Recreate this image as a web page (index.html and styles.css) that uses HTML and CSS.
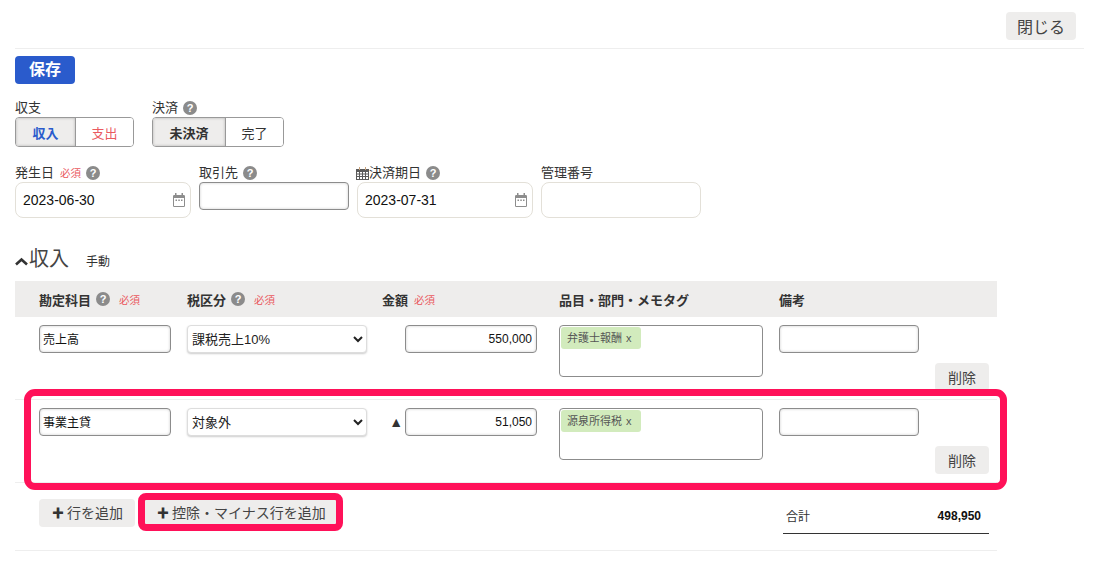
FILE: index.html
```html
<!DOCTYPE html>
<html lang="ja">
<head>
<meta charset="utf-8">
<title>収入</title>
<link rel="stylesheet" href="styles.css">
</head>
<body>
<header class="topbar"><button class="btn btn-close">閉じる</button></header>
<button class="btn-save">保存</button>

<div class="toggles">
  <div>
    <div class="label">収支</div>
    <div class="seg">
      <span class="seg-item seg-on seg-blue seg-w60">収入</span>
      <span class="seg-item seg-red seg-w58">支出</span>
    </div>
  </div>
  <div>
    <div class="label">決済<i class="help">?</i></div>
    <div class="seg">
      <span class="seg-item seg-on seg-w72">未決済</span>
      <span class="seg-item seg-w58">完了</span>
    </div>
  </div>
</div>

<div class="fields">
  <div class="field f176">
    <div class="label">発生日<em class="req">必須</em><i class="help">?</i></div>
    <div class="date-wrap">
      <input class="soft" value="2023-06-30" aria-label="発生日">
      <svg class="cal" viewBox="0 0 12 14"><path fill="#8d8d8d" d="M2 0h1.500v2h5V0H10v2h.8A1.200 1.200 0 0 1 12 3.200v9.600a1.200 1.200 0 0 1-1.200 1.200H1.200A1.200 1.200 0 0 1 0 12.800V3.200A1.200 1.200 0 0 1 1.200 2H2z"/><path fill="#fff" d="M1 5h10v8H1z"/><path fill="#8d8d8d" d="M2.500 6.500h1.500V8H2.500zM5.300 6.500h1.500V8H5.300zM8 6.500h1.500V8H8z"/></svg>
    </div>
  </div>
  <div class="field f150">
    <div class="label">取引先<i class="help">?</i></div>
    <input class="hard hard-full" aria-label="取引先">
  </div>
  <div class="field f176">
    <div class="label label-cal"><svg class="emoji" viewBox="0 0 13 13"><path fill="#5a5a5a" d="M0 2h13v11H0z"/><path fill="#c9a27a" d="M3 0h1v3H3zM9 0h1v3H9z"/><path fill="#fff" d="M1 5h2v1.500H1zM4 5h2v1.500H4zM7 5h2v1.500H7zM10 5h2v1.500h-2zM1 7.500h2V9H1zM4 7.500h2V9H4zM7 7.500h2V9H7zM10 7.500h2V9h-2zM1 10h2v2H1zM4 10h2v2H4zM7 10h2v2H7zM10 10h2v2h-2z"/></svg>決済期日<i class="help">?</i></div>
    <div class="date-wrap">
      <input class="soft" value="2023-07-31" aria-label="決済期日">
      <svg class="cal" viewBox="0 0 12 14"><path fill="#8d8d8d" d="M2 0h1.500v2h5V0H10v2h.8A1.200 1.200 0 0 1 12 3.200v9.600a1.200 1.200 0 0 1-1.200 1.200H1.200A1.200 1.200 0 0 1 0 12.800V3.200A1.200 1.200 0 0 1 1.200 2H2z"/><path fill="#fff" d="M1 5h10v8H1z"/><path fill="#8d8d8d" d="M2.500 6.500h1.500V8H2.500zM5.300 6.500h1.500V8H5.300zM8 6.500h1.500V8H8z"/></svg>
    </div>
  </div>
  <div class="field f160">
    <div class="label">管理番号</div>
    <input class="soft" aria-label="管理番号">
  </div>
</div>

<div class="section-head">
  <svg class="chev" viewBox="0 0 13 9"><path fill="none" stroke="#333" stroke-width="2.600" d="M1 7.500l5.500-5 5.500 5"/></svg>
  <h2 class="section-title">収入</h2>
  <span class="section-mode">手動</span>
</div>

<div class="table">
  <div class="grid thead">
    <div>勘定科目<i class="help">?</i><em class="req req-head">必須</em></div>
    <div>税区分<i class="help">?</i><em class="req req-head">必須</em></div>
    <div>金額<em class="req">必須</em></div>
    <div>品目・部門・メモタグ</div>
    <div>備考</div>
  </div>

  <div class="grid row">
    <input class="hard cell-account" value="売上高" aria-label="勘定科目">
    <select class="sel" aria-label="税区分"><option>課税売上10%</option></select>
    <div class="amount"><input class="hard num" value="550,000" aria-label="金額"></div>
    <div class="tagbox"><span class="tag">弁護士報酬 <span class="tag-x">x</span></span></div>
    <div class="note-cell">
      <input class="hard cell-note" aria-label="備考">
      <button class="btn btn-del">削除</button>
    </div>
  </div>

  <div class="grid row row-marked">
    <input class="hard cell-account" value="事業主貸" aria-label="勘定科目">
    <select class="sel" aria-label="税区分"><option>対象外</option></select>
    <div class="amount"><span class="minus">▲</span><input class="hard num" value="51,050" aria-label="金額"></div>
    <div class="tagbox"><span class="tag">源泉所得税 <span class="tag-x">x</span></span></div>
    <div class="note-cell">
      <input class="hard cell-note" aria-label="備考">
      <button class="btn btn-del">削除</button>
    </div>
    <div class="mark mark-row"></div>
  </div>

  <div class="foot">
    <div class="adders">
      <button class="btn btn-add"><span class="plus">✚</span>行を追加</button>
      <div class="adder-marked">
        <button class="btn btn-add"><span class="plus">✚</span>控除・マイナス行を追加</button>
        <div class="mark mark-btn"></div>
      </div>
    </div>
    <div class="total"><span class="total-label">合計</span><strong>498,950</strong></div>
  </div>
</div>
<hr class="end">
</body>
</html>
```
FILE: styles.css
```css
* { box-sizing: border-box; }
html, body { margin: 0; padding: 0; }
body {
  height: 566px;
  overflow: hidden;
  padding: 12px 14px 0 15px;
  background: #fff;
  color: #333;
  font-family: "Liberation Sans", "Noto Sans CJK JP", sans-serif;
  font-size: 13px;
}
button, input, select { font-family: inherit; margin: 0; }

.topbar {
  display: flex;
  justify-content: flex-end;
  height: 37px;
  padding-right: 8px;
  border-bottom: 1px solid #eee;
}
.btn {
  border: 0;
  border-radius: 4px;
  background: #eeedec;
  color: #444;
  font-size: 14px;
  height: 28px;
  padding: 0 12px;
  white-space: nowrap;
}
.btn-close { width: 70px; font-size: 16px; padding: 0; }
.btn-save {
  display: block;
  width: 60px;
  height: 28px;
  margin-top: 7px;
  padding: 0 0 5px;
  border: 0;
  border-radius: 4px;
  background: #2a5bcc;
  color: #fff;
  font-size: 16px;
  font-weight: 700;
}

.label { height: 18px; line-height: 18px; color: #333; white-space: nowrap; display: flex; align-items: center; }
.help {
  display: inline-block;
  width: 14px;
  height: 14px;
  margin-left: 5px;
  border-radius: 50%;
  background: #8b8b8b;
  color: #fff;
  font: 700 11px/14px "Liberation Sans", sans-serif;
  text-align: center;
  flex: none;
}
.req { font-style: normal; font-size: 10.5px; color: #ea5a5f; margin-left: 6px; font-weight: 400; }

.toggles { display: flex; gap: 18px; margin-top: 15px; }
.seg { display: flex; height: 30px; border: 1px solid #999; border-radius: 4px; overflow: hidden; }
.seg-item { display: flex; align-items: center; justify-content: center; background: #fff; color: #333; }
.seg-item + .seg-item { border-left: 1px solid #999; }
.seg-on { background: #eeedec; font-weight: 700; box-shadow: inset 0 0 3px rgba(0,0,0,.25); }
.seg-blue { color: #2a5bcc; }
.seg-red { color: #ea5a5f; }
.seg-w60 { width: 59px; }
.seg-w58 { width: 58px; }
.seg-w72 { width: 72px; }

.fields { display: flex; align-items: flex-start; gap: 8px; margin-top: 17px; }
.field { flex: none; }
.f176 { width: 176px; }
.f150 { width: 150px; }
.f160 { width: 160px; }
.emoji { width: 13px; height: 13px; margin-left: -1px; flex: none; }
.date-wrap { position: relative; }
.soft {
  display: block;
  width: 100%;
  height: 36px;
  padding: 0 7px;
  border: 1px solid #e3e0d8;
  border-radius: 8px;
  background: #fff;
  color: #111;
  font-size: 14px;
}
.cal { position: absolute; right: 6px; top: 11px; width: 12px; height: 14px; }
.hard {
  display: block;
  height: 28px;
  padding: 0 3px;
  border: 1px solid #8c8c8c;
  border-radius: 4px;
  background: #fff;
  color: #111;
  font-size: 12px;
  box-shadow: inset 0 0 3px rgba(0,0,0,.2);
}
.hard-full { width: 100%; }

.section-head { display: flex; align-items: center; height: 28px; margin-top: 27px; }
.chev { width: 13px; height: 9px; margin-top: 5px; flex: none; }
.section-title { margin: 0 0 0 1px; font-size: 20px; font-weight: 400; line-height: 28px; color: #444; }
.section-mode { margin-left: 17px; font-size: 12px; margin-top: 3px; }

.table { width: 982px; margin-top: 8px; }
.grid { display: grid; grid-template-columns: 148px 195px 177px 220px 1fr; padding-left: 24px; }
.thead {
  height: 36px;
  align-items: center;
  background: #eeedec;
  font-weight: 700;
  white-space: nowrap;
}
.thead > div { display: flex; align-items: center; }
.req-head { margin-left: 9px; }

.row {
  position: relative;
  height: 83px;
  padding-top: 8px;
  padding-right: 8px;
  border-bottom: 1px solid #eee;
}
.cell-account { width: 132px; padding-bottom: 2px; }
.sel {
  width: 180px;
  height: 28px;
  padding: 0;
  border: 1px solid #ddd;
  border-radius: 4px;
  background: #fff;
  color: #222;
  font-size: 13px;
  box-shadow: 0 1px 2px rgba(0,0,0,.2);
}
.amount { display: flex; justify-content: flex-end; align-items: flex-start; width: 155px; position: relative; }
.minus { font-size: 14px; line-height: 28px; margin-right: 2px; color: #333; }
.num { width: 132px; padding-right: 4px; text-align: right; }
.tagbox {
  width: 204px;
  height: 52px;
  padding: 1px;
  border: 1px solid #8c8c8c;
  border-radius: 4px;
  background: #fff;
}
.tag {
  display: inline-block;
  width: 80px;
  height: 22px;
  padding-left: 6px;
  border-radius: 3px;
  background: #d2ebbd;
  color: #555;
  font-size: 11px;
  line-height: 22px;
  white-space: nowrap;
}
.tag-x { margin-left: 1px; }
.note-cell { display: flex; flex-direction: column; align-items: flex-start; }
.cell-note { width: 140px; }
.btn-del { width: 54px; padding: 0; margin: 10px 0 0 156px; }

.mark { position: absolute; border: 7px solid #ff1159; pointer-events: none; }
.mark-row { left: 9px; top: -11px; width: 983px; height: 101px; border-radius: 11px; }

.foot { display: flex; justify-content: space-between; align-items: flex-start; padding: 16px 8px 0 24px; }
.adders { display: flex; gap: 9px; }
.adder-marked { position: relative; }
.btn-add { display: flex; align-items: center; padding: 0 12px 2px 13px; }
.plus { margin-right: 3px; color: #333; font-size: 12px; }
.mark-btn { left: -6px; top: -6px; right: -5px; bottom: -4px; border-radius: 8px; }
.total {
  display: flex;
  justify-content: space-between;
  align-items: center;
  width: 206px;
  height: 35px;
  padding: 0 8px 0 3px;
  border-bottom: 1px solid #333;
  font-size: 12px;
}
.total-label { margin-bottom: 2px; }
.total strong { color: #111; }
.end { width: 982px; height: 1px; margin: 16px 0 0; border: 0; background: #eee; }
```
